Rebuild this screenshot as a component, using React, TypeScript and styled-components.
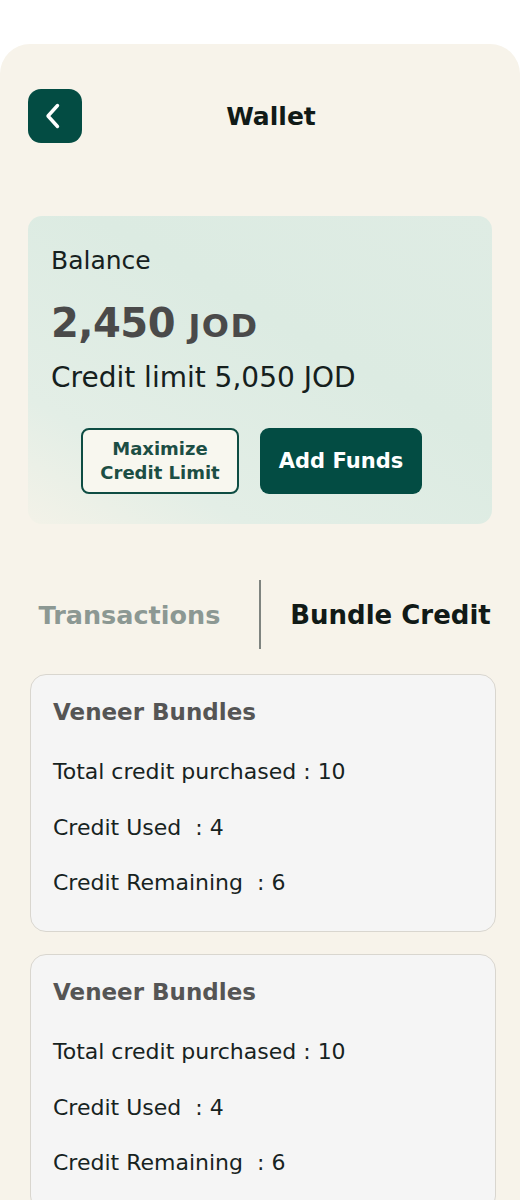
import React from "react";
import styled, { createGlobalStyle } from "styled-components";

const GlobalStyle = createGlobalStyle`
  html, body {
    margin: 0;
    padding: 0;
    background: #ffffff;
  }
  body {
    font-family: "DejaVu Sans", "Noto Sans", sans-serif;
  }
`;

interface Bundle {
  name: string;
  purchased: number;
  used: number;
  remaining: number;
}

const bundles: Bundle[] = [
  { name: "Veneer Bundles", purchased: 10, used: 4, remaining: 6 },
  { name: "Veneer Bundles", purchased: 10, used: 4, remaining: 6 },
];

export default function App() {
  return (
    <>
      <GlobalStyle />
      <Page>
        <Phone>
          <Header>
            <BackButton aria-label="Back">
              <svg width="16" height="26" viewBox="0 0 16 26" fill="none">
                <path
                  d="M12.5 2.5L3 13l9.5 10.5"
                  stroke="#fff"
                  strokeWidth="3.4"
                  strokeLinecap="round"
                  strokeLinejoin="round"
                />
              </svg>
            </BackButton>
            <Title>Wallet</Title>
          </Header>

          <BalanceCard>
            <Label>Balance</Label>
            <Amount>
              2,450 <Currency>JOD</Currency>
            </Amount>
            <CreditLimit>Credit limit 5,050 JOD</CreditLimit>
            <Actions>
              <OutlineButton>
                Maximize
                <br />
                Credit Limit
              </OutlineButton>
              <SolidButton>Add Funds</SolidButton>
            </Actions>
          </BalanceCard>

          <Tabs>
            <Tab>Transactions</Tab>
            <Divider />
            <Tab active>Bundle Credit</Tab>
          </Tabs>

          <List>
            {bundles.map((b, i) => (
              <BundleCard key={i}>
                <BundleName>{b.name}</BundleName>
                <Row>Total credit purchased : {b.purchased}</Row>
                <Row>Credit Used&nbsp; : {b.used}</Row>
                <Row>Credit Remaining&nbsp; : {b.remaining}</Row>
              </BundleCard>
            ))}
          </List>
        </Phone>
      </Page>
    </>
  );
}

const Page = styled.div`
  padding-top: 44px;
  width: 520px;
  height: 1200px;
  overflow: hidden;
  box-sizing: border-box;
`;

const Phone = styled.div`
  background: #f7f3ea;
  border-radius: 30px 30px 0 0;
  min-height: 1156px;
  padding-top: 45px;
  box-sizing: border-box;
`;

const Header = styled.div`
  display: flex;
  align-items: center;
  height: 54px;
  padding: 0 24px 0 28px;
`;

const BackButton = styled.button`
  width: 54px;
  height: 54px;
  border: none;
  border-radius: 13px;
  background: #034c43;
  display: flex;
  align-items: center;
  justify-content: center;
  padding: 0 4px 0 0;
  flex-shrink: 0;
`;

const Title = styled.h1`
  flex: 1;
  margin: 0;
  padding-right: 36px;
  text-align: center;
  font-size: 25px;
  font-weight: 700;
  color: #111a17;
`;

const BalanceCard = styled.section`
  margin: 73px 0 0 28px;
  width: 464px;
  height: 308px;
  box-sizing: border-box;
  border-radius: 14px;
  padding: 30px 23px 0;
  background: linear-gradient(
    30deg,
    #f3f2e8 0%,
    #e3eee6 22%,
    #dcebe2 60%,
    #dfece4 100%
  );
`;

const Label = styled.div`
  font-size: 25px;
  color: #16211e;
  line-height: 30px;
`;

const Amount = styled.div`
  margin-top: 22px;
  font-size: 40px;
  font-weight: 700;
  color: #4a4a4a;
  line-height: 50px;
  letter-spacing: -0.5px;
`;

const Currency = styled.span`
  font-size: 32px;
  letter-spacing: 1.5px;
`;

const CreditLimit = styled.div`
  margin-top: 10px;
  font-size: 28px;
  color: #15201d;
  line-height: 34px;
`;

const Actions = styled.div`
  margin-top: 33px;
  display: flex;
  gap: 21px;
  padding-left: 30px;
`;

const OutlineButton = styled.button`
  width: 158px;
  height: 66px;
  border: 2px solid #0e4d43;
  border-radius: 8px;
  background: #f8f7ef;
  color: #1c4e44;
  font-family: inherit;
  font-size: 18px;
  font-weight: 700;
  line-height: 24px;
  padding: 0;
`;

const SolidButton = styled.button`
  width: 162px;
  height: 66px;
  border: none;
  border-radius: 9px;
  background: #034c43;
  color: #ffffff;
  font-family: inherit;
  font-size: 21px;
  font-weight: 700;
  padding: 0;
`;

const Tabs = styled.div`
  margin-top: 56px;
  display: flex;
  align-items: center;
  height: 69px;
`;

const Tab = styled.div<{ active?: boolean }>`
  flex: 1;
  text-align: center;
  font-size: ${(p) => (p.active ? "26px" : "25.5px")};
  font-weight: 700;
  color: ${(p) => (p.active ? "#111a17" : "#8c9893")};
`;

const Divider = styled.div`
  width: 2px;
  align-self: stretch;
  background: #7f8480;
`;

const List = styled.div`
  margin-top: 25px;
  display: flex;
  flex-direction: column;
  gap: 22px;
  padding: 0 24px 0 30px;
`;

const BundleCard = styled.div`
  width: 466px;
  height: 258px;
  box-sizing: border-box;
  background: #f5f5f5;
  border: 1.5px solid #d9d6cf;
  border-radius: 16px;
  padding: 22px 22px 0;
`;

const BundleName = styled.div`
  font-size: 23px;
  font-weight: 700;
  color: #555555;
  line-height: 30px;
  margin-bottom: 30px;
`;

const Row = styled.div`
  font-size: 22px;
  color: #17231f;
  line-height: 30px;
  margin-bottom: 25.5px;
`;
